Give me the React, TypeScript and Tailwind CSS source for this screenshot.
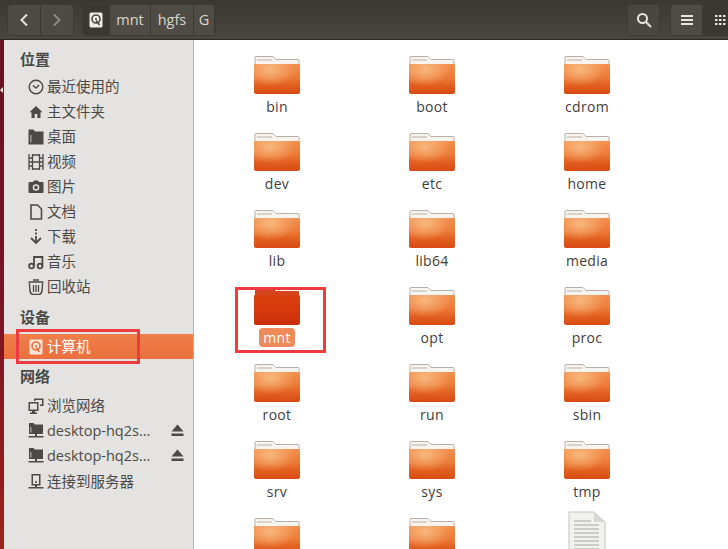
import React from "react";

const FONT = "[font-family:'Open_Sans','Noto_Sans_CJK_SC',sans-serif]";

const folders = [
  "bin", "boot", "cdrom",
  "dev", "etc", "home",
  "lib", "lib64", "media",
  "mnt", "opt", "proc",
  "root", "run", "sbin",
  "srv", "sys", "tmp",
];

const DiskIcon = ({ light }: { light?: boolean }) => (
  <svg width="14" height="16" viewBox="0 0 14 16">
    <rect x="0.5" y="0.5" width="13" height="15" rx="1.5" fill={light ? "#fde6d8" : "#eeeeea"} />
    <circle cx="7" cy="7" r="4" fill="none" stroke={light ? "#e8703c" : "#4a4843"} strokeWidth="1.6" />
    <circle cx="7" cy="7" r="1" fill={light ? "#e8703c" : "#4a4843"} />
    <path d="M7 8.5 L10.5 13" stroke={light ? "#e8703c" : "#4a4843"} strokeWidth="1.6" />
  </svg>
);

const Folder = ({ id, selected }: { id: string; selected?: boolean }) => (
  <svg width="48" height="40" viewBox="0 0 48 40">
    <defs>
      <linearGradient id={`body-${id}`} x1="0" y1="0" x2="0" y2="1">
        <stop offset="0" stopColor={selected ? "#d9400f" : "#f2904f"} />
        <stop offset="0.45" stopColor={selected ? "#d63a0c" : "#ec7a38"} />
        <stop offset="0.7" stopColor={selected ? "#d0340a" : "#e2601f"} />
        <stop offset="1" stopColor={selected ? "#c92d05" : "#d84a12"} />
      </linearGradient>
      <radialGradient id={`glow-${id}`} cx="0.35" cy="0.2" r="0.55">
        <stop offset="0" stopColor="#fbc78f" stopOpacity="0.75" />
        <stop offset="1" stopColor="#fbc78f" stopOpacity="0" />
      </radialGradient>
    </defs>
    {selected ? (
      <path d="M2 1h18l3 3h22a1 1 0 0 1 1 1v6H2z" fill="#d5441c" />
    ) : (
      <>
        <path d="M2 1.500a1 1 0 0 1 1-1h17l3 3h22a1 1 0 0 1 1 1V12H2z" fill="#f7f4ef" stroke="#a89c90" strokeWidth="0.8" />
        <path d="M4 3h15v2H4z" fill="#d8d2c8" />
      </>
    )}
    <path d="M1 9a1 1 0 0 1 1-1h44a1 1 0 0 1 1 1v27a2 2 0 0 1-2 2H3a2 2 0 0 1-2-2z" fill={`url(#body-${id})`} />
    {!selected && (
      <path d="M1 9a1 1 0 0 1 1-1h44a1 1 0 0 1 1 1v27a2 2 0 0 1-2 2H3a2 2 0 0 1-2-2z" fill={`url(#glow-${id})`} />
    )}
  </svg>
);

const g = { fill: "#4c4a46" };

const icons: Record<string, React.ReactNode> = {
  clock: (
    <svg width="16" height="16" viewBox="0 0 16 16" fill="none" stroke="#4c4a46" strokeWidth="1.4">
      <circle cx="8" cy="8" r="6.8" />
      <path d="M4.800 6.500 8 9l3-3" />
    </svg>
  ),
  home: (
    <svg width="16" height="16" viewBox="0 0 16 16" {...g}>
      <path d="M8 2 1.500 8.200h2V14h3.200v-4h2.600v4h3.200V8.200h2z" />
    </svg>
  ),
  desktop: (
    <svg width="16" height="16" viewBox="0 0 16 16" {...g}>
      <path d="M0.500 .5h5l1.500 2h8.500v13H.5zM2.500 6v7.500h.8V6z" fillRule="evenodd" />
    </svg>
  ),
  video: (
    <svg width="16" height="16" viewBox="0 0 16 16" fill="none" stroke="#4c4a46" strokeWidth="1.3">
      <path d="M1 0v16M4.500 0v16M11.500 0v16M15 0v16M4.500 1h7M4.500 8h7M4.500 15h7M1 4h3.500M1 8h3.500M1 12h3.500M11.500 4H15M11.500 8H15M11.500 12H15" />
    </svg>
  ),
  camera: (
    <svg width="16" height="16" viewBox="0 0 16 16" {...g}>
      <path fillRule="evenodd" d="M1.500 3H5l1-1.500h4L11 3h3.500A1 1 0 0 1 15.500 4v9a1 1 0 0 1-1 1h-13a1 1 0 0 1-1-1V4a1 1 0 0 1 1-1zM8 5.200a3.300 3.300 0 1 0 0 6.600 3.300 3.300 0 0 0 0-6.600z" />
      <circle cx="8" cy="8.500" r="1.800" />
    </svg>
  ),
  doc: (
    <svg width="16" height="16" viewBox="0 0 16 16" fill="none" stroke="#4c4a46" strokeWidth="1.6">
      <path d="M3 1h6.500L13.500 5v10H3z" />
    </svg>
  ),
  download: (
    <svg width="16" height="16" viewBox="0 0 16 16" fill="none" stroke="#4c4a46" strokeWidth="1.8">
      <path d="M8 0v2M8 3.500v2M8 7v6M3 9l5 5 5-5" />
    </svg>
  ),
  music: (
    <svg width="16" height="16" viewBox="0 0 16 16" fill="none" stroke="#4c4a46" strokeWidth="1.8">
      <circle cx="3.500" cy="12" r="2.400" />
      <circle cx="12" cy="12" r="2.400" />
      <path d="M6 12V3h8.400v9" />
    </svg>
  ),
  trash: (
    <svg width="16" height="16" viewBox="0 0 16 16" fill="none" stroke="#4c4a46" strokeWidth="1.3">
      <path d="M.5 3h15M5 1h6" />
      <path d="M1.500 4c0 8 .5 11.500 3.500 11.500h6c3 0 3.500-3.500 3.500-11.500" />
      <path d="M5.500 6v7M8 6v7M10.500 6v7" />
    </svg>
  ),
  network: (
    <svg width="16" height="16" viewBox="0 0 16 16" {...g}>
      <path fillRule="evenodd" d="M0.500 4h10v9H7v1.500h2V16H2v-1.500h2V13H.5zM2 5.500v6h7v-6z" />
      <path d="M6 .5h9.500V8H12V6.500h2V2H7.500v1H6z" />
    </svg>
  ),
  share: (
    <svg width="16" height="16" viewBox="0 0 16 16" {...g}>
      <path fillRule="evenodd" d="M1 0h4.500l1.200 1.500H15V11H9v2h6.500v1.500H.5V13H7v-2H1zM2.500 4v5.500h.8V4z" />
    </svg>
  ),
  server: (
    <svg width="16" height="16" viewBox="0 0 16 16" {...g}>
      <path fillRule="evenodd" d="M3.500 0h9v11.500H9V13h6.500v1.500H.5V13H7v-1.500H3.500zM5 1.500V10h6V1.500z" />
      <circle cx="8" cy="8" r="1" />
    </svg>
  ),
};

const Eject = () => (
  <svg width="13" height="13" viewBox="0 0 13 13" fill="#4c4a46">
    <path d="M6.500 0.500 12.500 7.500H.5z" />
    <rect x="0.500" y="9.500" width="12" height="2.500" />
  </svg>
);

const Row = ({ icon, label, eject }: { icon: string; label: string; eject?: boolean }) => (
  <div className="flex h-[25px] items-center pl-[24px] pr-[9px] text-[14.5px] text-[#4c4a46]">
    <span className="mr-[3px] flex w-[16px] shrink-0 justify-center">{icons[icon]}</span>
    <span className="flex-1 whitespace-nowrap">{label}</span>
    {eject && <Eject />}
  </div>
);

const Heading = ({ children, className }: { children: React.ReactNode; className: string }) => (
  <div className={`pl-[16px] text-[15px] font-bold text-[#4c4a46] ${className}`}>{children}</div>
);

const Crumb = ({ children, className = "" }: { children: React.ReactNode; className?: string }) => (
  <div className={`flex h-[30px] items-center justify-center border-r border-[#3a3833] bg-[#4f4c46] text-[14.5px] text-[#d8d5cc] ${className}`}>
    {children}
  </div>
);

export default function App() {
  return (
    <div className={`relative flex h-[549px] w-[728px] flex-col overflow-hidden bg-white ${FONT}`}>
      {/* toolbar */}
      <header className="flex h-[40px] shrink-0 items-center border-b border-[#2c2a26] bg-[linear-gradient(#3a3833,#4a4741)] pl-[7px]">
        <div className="flex h-[32px] w-[67px] overflow-hidden rounded-[4px] border border-[#3d3b36] bg-[#4d4a44]">
          <div className="flex flex-1 items-center justify-center border-r border-[#3a3833]">
            <svg width="10" height="14" viewBox="0 0 10 14" fill="none" stroke="#e4e2dc" strokeWidth="2">
              <path d="M8 1.500 2.500 7 8 12.500" />
            </svg>
          </div>
          <div className="flex flex-1 items-center justify-center">
            <svg width="10" height="14" viewBox="0 0 10 14" fill="none" stroke="#8d8a83" strokeWidth="2">
              <path d="M2 1.500 7.500 7 2 12.500" />
            </svg>
          </div>
        </div>
        <div className="ml-[8px] flex overflow-hidden rounded-[4px] border border-[#3d3b36]">
          <Crumb className="w-[27px] !bg-[#3a3833]"><DiskIcon /></Crumb>
          <Crumb className="w-[41px]">mnt</Crumb>
          <Crumb className="w-[43px]">hgfs</Crumb>
          <Crumb className="w-[21px]">G</Crumb>
        </div>
        <div className="ml-auto flex items-center">
          <div className="flex h-[32px] w-[33px] items-center justify-center rounded-[4px] border border-[#3d3b36] bg-[#4a4741]">
            <svg width="16" height="16" viewBox="0 0 16 16" fill="none" stroke="#e8e6e0" strokeWidth="2">
              <circle cx="6.500" cy="6.500" r="4.500" />
              <path d="M10 10l5 5" />
            </svg>
          </div>
          <div className="ml-[10px] flex h-[32px] w-[33px] items-center justify-center rounded-l-[4px] border border-[#3d3b36] bg-[#4f4c46]">
            <svg width="12" height="12" viewBox="0 0 12 12" fill="#e8e6e0">
              <rect y="1" width="12" height="2" />
              <rect y="5" width="12" height="2" />
              <rect y="9" width="12" height="2" />
            </svg>
          </div>
          <div className="flex h-[32px] w-[25px] items-center justify-start bg-[#3a3833] pl-[12px]">
            <svg width="11" height="12" viewBox="0 0 11 12" fill="#e8e6e0" className="shrink-0">
              {[1, 5, 9].flatMap((y) =>
                [0, 4, 8].map((x) => <rect key={`${x}-${y}`} x={x} y={y} width="2.500" height="2" />)
              )}
            </svg>
          </div>
        </div>
      </header>

      <div className="flex min-h-0 flex-1">
        {/* desktop edge */}
        <div className="w-[4px] shrink-0 bg-[linear-gradient(#6a1020,#7a1226_50%,#9c2418)]" />

        {/* sidebar */}
        <aside className="w-[190px] shrink-0 border-r border-[#b5b3ae] bg-[#e4e3e1]">
          <Heading className="mt-[9px] h-[25px] leading-[20px]">位置</Heading>
          <div>
            <Row icon="clock" label="最近使用的" />
            <Row icon="home" label="主文件夹" />
            <Row icon="desktop" label="桌面" />
            <Row icon="video" label="视频" />
            <Row icon="camera" label="图片" />
            <Row icon="doc" label="文档" />
            <Row icon="download" label="下载" />
            <Row icon="music" label="音乐" />
            <Row icon="trash" label="回收站" />
          </div>
          <Heading className="mt-[8px] h-[22px] leading-[20px]">设备</Heading>
          <div className="mt-[5px] flex h-[25px] items-center bg-[linear-gradient(#ef7f4b,#ea6f3c)] pl-[24px] text-[14.5px] text-white">
            <span className="mr-[3px] flex w-[16px] justify-center"><DiskIcon light /></span>
            <span>计算机</span>
          </div>
          <Heading className="mt-[6px] h-[22px] leading-[22px]">网络</Heading>
          <div className="mt-[6px]">
            <Row icon="network" label="浏览网络" />
            <Row icon="share" label="desktop-hq2s..." eject />
            <Row icon="share" label="desktop-hq2s..." eject />
            <div className="mt-[1px]">
              <Row icon="server" label="连接到服务器" />
            </div>
          </div>
        </aside>

        {/* file grid */}
        <main className="grid flex-1 auto-rows-[77px] grid-cols-[155px_155px_155px] content-start pl-[5.5px] pt-[16px]">
          {folders.map((name) => (
            <div key={name} className="flex flex-col items-center">
              <Folder id={name} selected={name === "mnt"} />
              <span
                className={`mt-[1px] rounded-[4px] px-[4px] text-[14px] leading-[19px] tracking-[0.3px] ${
                  name === "mnt" ? "bg-[#ef8a5a] text-white" : "text-[#3f3d3a]"
                }`}
              >
                {name}
              </span>
            </div>
          ))}
          <div className="flex justify-center"><Folder id="extra1" /></div>
          <div className="flex justify-center"><Folder id="extra2" /></div>
          <div className="-mt-[7px] flex justify-center">
            <svg width="38" height="46" viewBox="0 0 38 46" className="shrink-0">
              <path d="M1 1h25l11 10v35H1z" fill="#f1f1ef" stroke="#c4c4c0" />
              <path d="M26 1v10h11z" fill="#d8d8d4" />
              <path d="M6 10h17M6 14h25M6 18h25M6 22h25M6 26h25M6 30h25M6 34h25M6 38h25" stroke="#a6a6a2" strokeWidth="1" />
              <path d="M29 41h8v5h-5z" fill="#2b2b2b" />
            </svg>
          </div>
        </main>
      </div>

      {/* launcher arrow on the desktop edge */}
      <div className="pointer-events-none absolute left-0 top-[87px] h-0 w-0 border-y-[3px] border-r-[3px] border-y-transparent border-r-[#e8e4e0]" />

      {/* red annotation boxes */}
      <div className="pointer-events-none absolute left-[16px] top-[329px] h-[35px] w-[124px] border-[3px] border-[#ee3b3f]" />
      <div className="pointer-events-none absolute left-[235px] top-[287px] h-[66px] w-[91px] border-[3px] border-[#ee3b3f]" />
    </div>
  );
}
